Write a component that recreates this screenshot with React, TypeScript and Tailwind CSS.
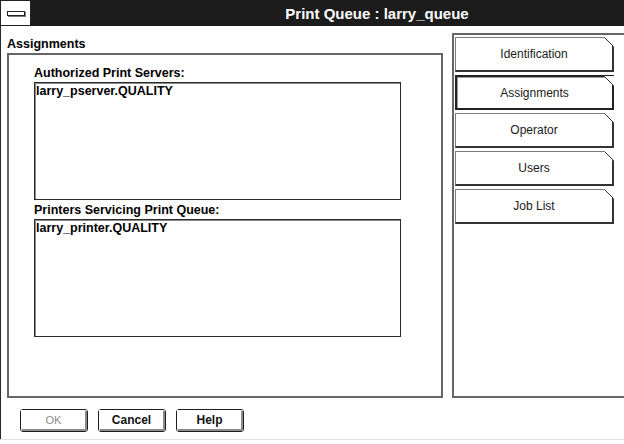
const tabs = [
  { label: "Identification", active: false },
  { label: "Assignments", active: true },
  { label: "Operator", active: false },
  { label: "Users", active: false },
  { label: "Job List", active: false },
];

function Fold() {
  return (
    <svg
      className="absolute top-[-1px] right-[-2px]"
      width="10"
      height="10"
      viewBox="0 0 10 10"
    >
      <polygon points="0,0 10,0 10,10" fill="#ffffff" />
      <line x1="0.5" y1="0.5" x2="9.5" y2="9.5" stroke="#333333" strokeWidth="1" />
    </svg>
  );
}

function PageTab({ label, active }: { label: string; active: boolean }) {
  const frame = active
    ? "border-2 border-[#222222] shadow-[inset_1px_1px_0_#9a9a9a]"
    : "border border-[#7a7a7a] border-r-2 border-b-2 border-r-[#333333] border-b-[#333333]";
  return (
    <div
      className={`relative h-[35px] w-[159px] shrink-0 bg-white flex items-center justify-center text-[12px] text-[#1a1a1a] ${frame}`}
    >
      {label}
      <Fold />
    </div>
  );
}

function Button({ label, disabled }: { label: string; disabled?: boolean }) {
  return (
    <div className="w-[68px] h-[23px] rounded-[3px] border border-[#1e1e1e] bg-white flex">
      <div className="flex-1 flex items-center justify-center border-t border-l border-white border-r-2 border-b-2 border-r-[#8a8a8a] border-b-[#8a8a8a]">
        <span
          className={
            disabled
              ? "text-[11px] text-[#8c8c8c]"
              : "text-[12px] font-bold text-[#111111]"
          }
        >
          {label}
        </span>
      </div>
    </div>
  );
}

function ListBox({ item }: { item: string }) {
  return (
    <div className="w-[367px] h-[118px] border border-[#2a2a2a] shadow-[inset_1px_1px_0_#8a8a8a] bg-white pt-px pl-px">
      <div className="text-[12.5px] leading-[14px] font-bold">{item}</div>
    </div>
  );
}

export default function App() {
  return (
    <div className="w-[624px] h-[444px] bg-white overflow-hidden font-['Liberation_Sans',Arial,sans-serif] text-black">
      <div className="h-[440px] flex flex-col border-b border-[#dedede]">
        {/* caption bar */}
        <div className="h-[26px] flex shrink-0">
          <div className="w-[31px] bg-white border border-[#222222] flex items-center justify-center">
            <div className="w-[18px] h-[5px] bg-white border border-[#222222] shadow-[1px_1px_0_#7a7a7a]" />
          </div>
          <div className="flex-1 bg-[#1c1c1c] flex items-center justify-center pl-[99px] text-white font-bold text-[15px] leading-none">
            Print Queue : larry_queue
          </div>
        </div>

        {/* client area */}
        <div className="flex-1 border-l border-[#2a2a2a] flex flex-col">
          <div className="flex">
            <div className="ml-[6px] w-[436px] shrink-0 flex flex-col">
              <div className="pt-[11px] h-[25px] text-[12.5px] leading-[14px] font-bold">
                Assignments
              </div>
              <div className="mt-[2px] h-[345px] border-2 border-[#666666] pl-[25px] pt-[11px] flex flex-col">
                <div className="text-[12.5px] leading-[14px] font-bold">
                  Authorized Print Servers:
                </div>
                <div className="mt-[2px]">
                  <ListBox item="larry_pserver.QUALITY" />
                </div>
                <div className="mt-[3px] text-[12.5px] leading-[14px] font-bold">
                  Printers Servicing Print Queue:
                </div>
                <div className="mt-[2px]">
                  <ListBox item="larry_printer.QUALITY" />
                </div>
              </div>
            </div>

            <div className="ml-[9px] mt-[7px] w-[200px] shrink-0 h-[365px] border-2 border-[#666666] pl-px pt-[2px] flex flex-col gap-[3px]">
              {tabs.map((t) => (
                <PageTab key={t.label} label={t.label} active={t.active} />
              ))}
            </div>
          </div>

          <div className="ml-[19px] mt-[11px] flex gap-[10px]">
            <Button label="OK" disabled />
            <Button label="Cancel" />
            <Button label="Help" />
          </div>
        </div>
      </div>
    </div>
  );
}
